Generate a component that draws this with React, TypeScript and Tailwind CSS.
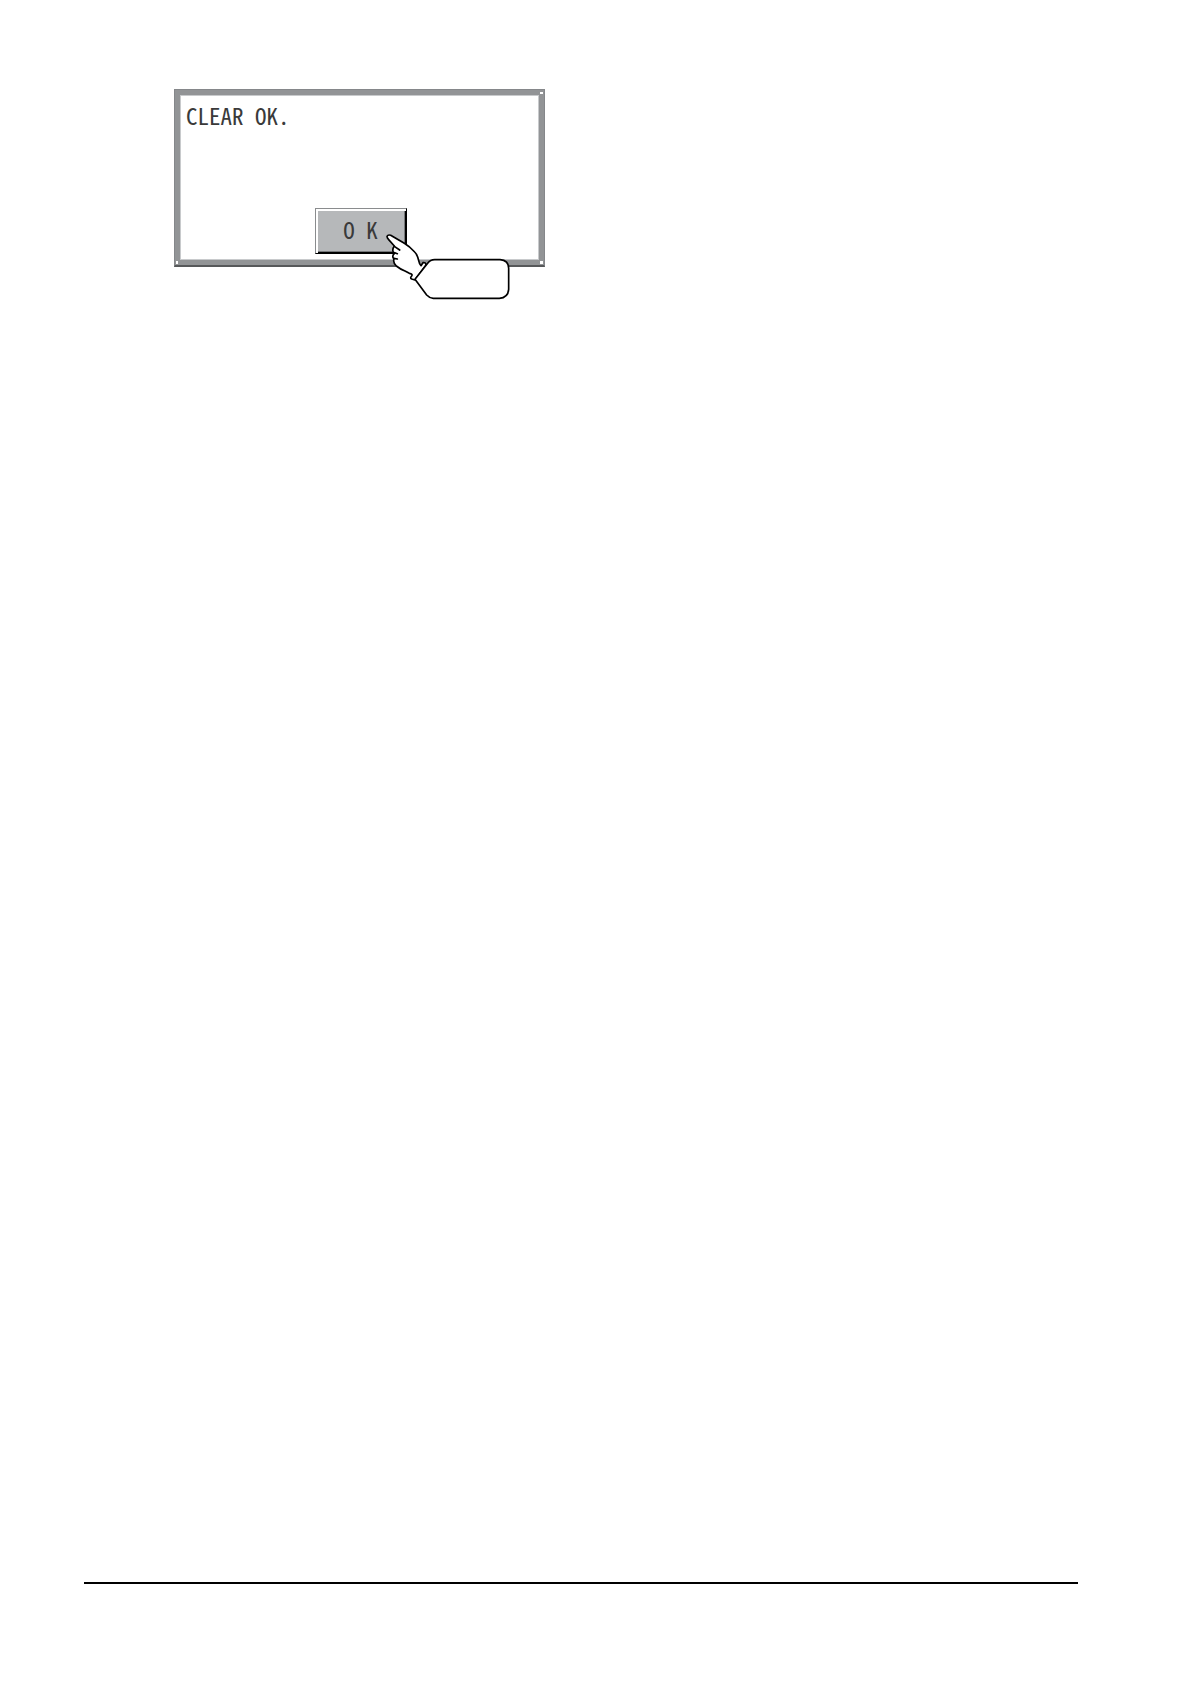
function PointingHand() {
  return (
    <svg
      viewBox="669 453 390 210"
      className="absolute top-[141px] left-52 w-[130px] h-[70px] pointer-events-none"
      fill="white"
      stroke="#000"
      strokeWidth="5"
      strokeLinejoin="round"
      strokeLinecap="round"
      aria-hidden="true"
    >
      {/* hand */}
      <path d="M798 555 Q797 546 789 548 L783 557 Q778 552 777 545 Q773 525 764 516 Q748 499 733 490 L692 466 Q684 463 681 469 Q681 474 686 479 L703 498 Q697 506 699 514 Q699 518 704 519 Q697 525 699 533 Q703 536 701 541 Q700 549 709 558 Q720 567 735 573 L748 580 Q759 582 755 588 Q749 594 755 597 L765 600 Z" />
      <path d="M703 499 L719 510 M704 518 L712 521 M701 535 L712 537" fill="none" />
      {/* callout */}
      <path d="M765 598 L803 550 Q811 539 824 539 H1020 Q1046 541 1046 565 V628 Q1044 653 1018 655 H820 Q808 654 800 645 Z" />
    </svg>
  )
}

function Dialog() {
  return (
    <div role="dialog" aria-labelledby="message" className="relative w-full max-w-[371px] bg-[#929496] border border-[#85878a] border-b-2 border-b-[#56585a] p-[5px]">
        <div className="absolute top-0.5 right-px w-[3px] h-0.5 bg-white" />
        <div className="absolute bottom-px left-px w-0.5 h-[3px] bg-white" />
        <div className="absolute bottom-px right-px w-[3px] h-[3px] bg-white" />
        <div className="flex flex-col justify-between h-[165px] bg-white border border-[#c8cacc] pt-[3px] pb-[5px]">
            <div id="message" className="pl-[5px] text-[23px] leading-8">CLEAR OK.</div>
            <div className="flex justify-center pl-0.5">
                <button type="button" className="w-[92px] h-[46px] pb-1 bg-[#b6b8ba] border border-t-[#8a8c8e] border-l-[#8a8c8e] border-r-black border-b-black shadow-[inset_2px_2px_0_white,inset_-1px_-1px_0_black,inset_-2px_-2px_0_#77797b] text-[23px] leading-8">O K</button>
            </div>
        </div>
        <PointingHand />
    </div>
  )
}

export default function App() {
  return (
    <div className="min-h-screen flex flex-col bg-white pt-[89px] pb-[100px] pl-[84px] pr-[112px] text-[#3a3a3a] font-light font-['Noto_Sans_Mono_CJK_JP','Noto_Sans_CJK_JP',monospace]">
        <main className="grow pl-[90px]">
            <Dialog />
        </main>
        <footer className="border-t-2 border-black" />
    </div>
  )
}
